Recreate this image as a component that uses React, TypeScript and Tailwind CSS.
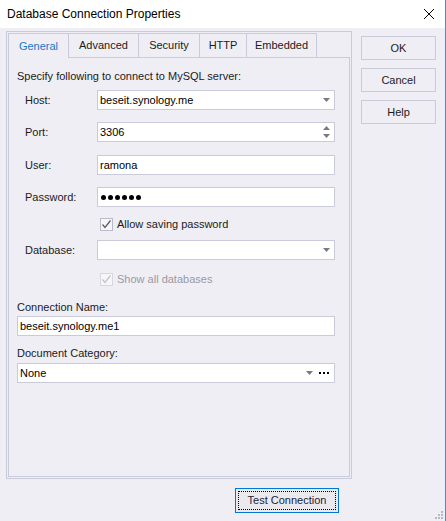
import React from 'react';

const font = { fontFamily: '"Liberation Sans", Arial, sans-serif' };

const Arrow: React.FC<{ up?: boolean }> = ({ up }) => (
  <svg width="7" height="4" viewBox="0 0 7 4" className="block">
    <polygon points={up ? '0,4 7,4 3.5,0' : '0,0 7,0 3.5,4'} fill="#7a7a80" />
  </svg>
);

const Check: React.FC<{ disabled?: boolean }> = ({ disabled }) => (
  <div
    className={`w-[13px] h-[13px] border flex items-center justify-center bg-[#f6f6f9] ${
      disabled ? 'border-[#d6d7e2]' : 'border-[#b9bacb]'
    }`}
  >
    <svg width="11" height="11" viewBox="0 0 11 11">
      <polyline
        points="1.5,5.5 4,8.5 9.5,1.5"
        fill="none"
        stroke={disabled ? '#c4c4cc' : '#5c5c66'}
        strokeWidth="1.3"
      />
    </svg>
  </div>
);

const Field: React.FC<{ value?: string; combo?: boolean; spin?: boolean; className?: string; children?: React.ReactNode }> = ({
  value,
  combo,
  spin,
  className = 'w-[238px]',
  children,
}) => (
  <div className={`h-[20px] bg-white border border-[#c9cada] flex items-center pl-[2px] pr-[4px] ${className}`}>
    <span className="flex-1 text-[11px] text-black leading-none flex items-center">{value}</span>
    {children}
    {combo && <Arrow />}
    {spin && (
      <div className="flex flex-col gap-[4px]">
        <Arrow up />
        <Arrow />
      </div>
    )}
  </div>
);

const Row: React.FC<{ label: string; children: React.ReactNode; className?: string }> = ({ label, children, className = '' }) => (
  <div className={`flex items-center ${className}`}>
    <span className="w-[80px] shrink-0 pl-[8px] text-[11px] text-[#1b1b1b]">{label}</span>
    {children}
  </div>
);

const Btn: React.FC<{ label: string }> = ({ label }) => (
  <div className="w-[75px] h-[24px] border border-[#c9cada] bg-[#efeef4] flex items-center justify-center text-[11px] text-[#1b1b1b]">
    {label}
  </div>
);

export default function App() {
  const tabs = ['Advanced', 'Security', 'HTTP', 'Embedded'];
  const tabW = ['w-[70px]', 'w-[61px]', 'w-[47px]', 'w-[71px]'];

  return (
    <div className="w-[446px] h-[521px] bg-[#efeef4] border-r border-[#1ba1e2] relative overflow-hidden" style={font}>
      {/* title bar */}
      <div className="h-[28px] bg-white flex items-center justify-between pl-[7px] pr-[11px]">
        <span className="text-[12px] text-black">Database Connection Properties</span>
        <svg width="10" height="10" viewBox="0 0 10 10">
          <path d="M0 0L10 10M10 0L0 10" stroke="#000" strokeWidth="1" />
        </svg>
      </div>

      <div className="flex">
        {/* main frame */}
        <div className="ml-[6px] mt-[3px] w-[346px] h-[448px] border border-[#c9cada] p-[1px]">
          <div className="flex flex-col h-full">
            {/* tabs */}
            <div className="flex h-[25px] text-[11px]">
              <div className="w-[60px] border-l border-t border-[#c9cada] flex items-center justify-center text-[#1976c8]">
                General
              </div>
              {tabs.map((t, i) => (
                <div
                  key={t}
                  className={`${tabW[i]} border-l border-t border-b border-[#c9cada] flex items-center justify-center text-[#1b1b1b] ${
                    i === tabs.length - 1 ? 'border-r' : ''
                  }`}
                >
                  {t}
                </div>
              ))}
              <div className="flex-1 border-b border-[#c9cada]" />
            </div>

            {/* tab content */}
            <div className="flex-1 border-l border-r border-b border-[#c9cada] pl-[8px] pt-[10px] flex flex-col text-[11px] text-[#1b1b1b]">
              <div className="h-[16px] flex items-center">Specify following to connect to MySQL server:</div>

              <Row label="Host:" className="mt-[6px]">
                <Field value="beseit.synology.me" combo />
              </Row>
              <Row label="Port:" className="mt-[12px]">
                <Field value="3306" spin />
              </Row>
              <Row label="User:" className="mt-[13px]">
                <Field value="ramona" />
              </Row>
              <Row label="Password:" className="mt-[12px]">
                <Field>
                  <div className="absolute flex gap-[2px] pl-[1px]">
                    {[0, 1, 2, 3, 4, 5].map((d) => (
                      <span key={d} className="w-[5px] h-[5px] rounded-full bg-black" />
                    ))}
                  </div>
                </Field>
              </Row>
              <div className="mt-[9px] h-[16px] flex items-center pl-[83px] gap-[4px]">
                <Check />
                <span>Allow saving password</span>
              </div>
              <Row label="Database:" className="mt-[8px]">
                <Field combo />
              </Row>
              <div className="mt-[11px] h-[16px] flex items-center pl-[83px] gap-[4px] text-[#9a9aa4]">
                <Check disabled />
                <span>Show all databases</span>
              </div>

              <div className="mt-[12px] h-[16px] flex items-center">Connection Name:</div>
              <Field value="beseit.synology.me1" className="w-[318px] mt-[1px]" />

              <div className="mt-[9px] h-[16px] flex items-center">Document Category:</div>
              <Field value="None" className="w-[318px] mt-[2px]">
                <span className="mr-[6px]">
                  <Arrow />
                </span>
                <div className="flex gap-[2px] mr-[1px]">
                  <span className="w-[2px] h-[2px] bg-black" />
                  <span className="w-[2px] h-[2px] bg-black" />
                  <span className="w-[2px] h-[2px] bg-black" />
                </div>
              </Field>
            </div>
          </div>
        </div>

        {/* right buttons */}
        <div className="ml-[9px] mt-[8px] flex flex-col gap-[8px]">
          <Btn label="OK" />
          <Btn label="Cancel" />
          <Btn label="Help" />
        </div>
      </div>

      {/* test connection */}
      <div className="ml-[235px] mt-[9px] w-[104px] h-[25px] border border-[#0078d7] bg-[#e9e9ee] p-[2px]">
        <div className="w-full h-full border border-dotted border-black flex items-center justify-center text-[11px] text-[#1b1b3a]">
          Test Connection
        </div>
      </div>

      {/* size grip */}
      <svg width="8" height="8" viewBox="0 0 8 8" className="absolute right-[2px] bottom-[2px]">
        <rect x="6" y="0" width="2" height="2" fill="#b8b8c2" />
        <rect x="3" y="3" width="2" height="2" fill="#b8b8c2" />
        <rect x="6" y="3" width="2" height="2" fill="#b8b8c2" />
        <rect x="0" y="6" width="2" height="2" fill="#b8b8c2" />
        <rect x="3" y="6" width="2" height="2" fill="#b8b8c2" />
        <rect x="6" y="6" width="2" height="2" fill="#b8b8c2" />
      </svg>
    </div>
  );
}
